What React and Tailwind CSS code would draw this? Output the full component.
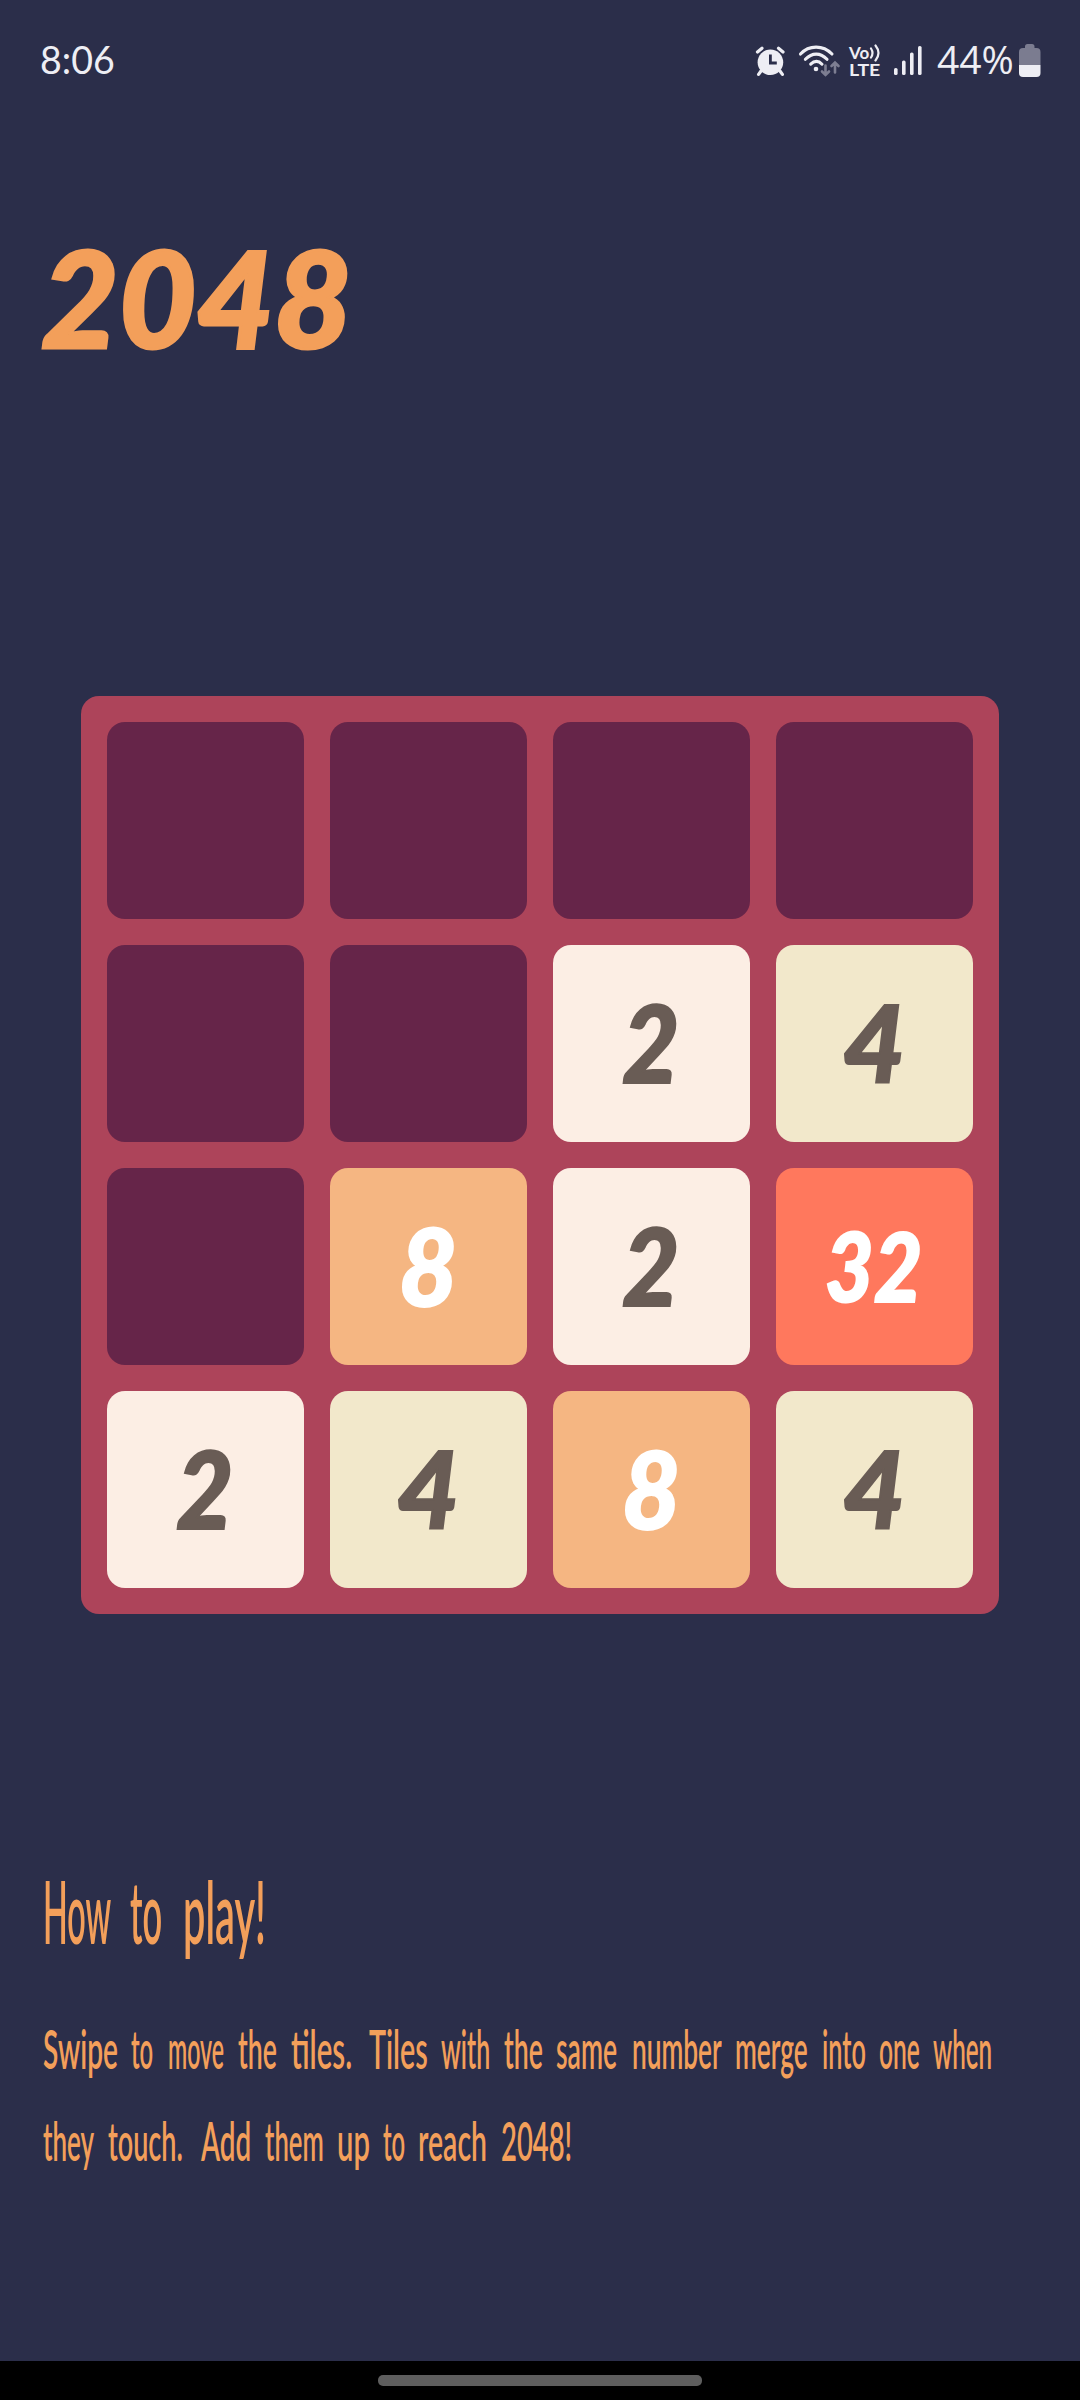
import { useLayoutEffect, useRef } from "react";

const BOARD = [
  0, 0, 0, 0,
  0, 0, 2, 4,
  0, 8, 2, 32,
  2, 4, 8, 4,
];

const TILE_STYLES = {
  0: "bg-[#662549]",
  2: "bg-[#fceee4] text-[#695c55] text-[106px]",
  4: "bg-[#f2e8cb] text-[#695c55] text-[106px]",
  8: "bg-[#f5b682] text-white text-[106px]",
  32: "bg-[#ff785d] text-white text-[96px]",
};

const TILE_WIDTHS = { 2: 57, 4: 62, 8: 58, 32: 97 };

// [word, space before it, width]
const HEADING = [["How", 0, 68], ["to", 19, 32], ["play!", 21, 83]];
const LINE_1 = [
  ["Swipe", 0, 75], ["to", 13, 22], ["move", 15, 56], ["the", 14, 39], ["tiles.", 14, 61],
  ["Tiles", 17, 59], ["with", 13, 49], ["the", 14, 39], ["same", 13, 61], ["number", 15, 90],
  ["merge", 13, 73], ["into", 14, 44], ["one", 13, 41], ["when", 13, 59],
];
const LINE_2 = [
  ["they", 0, 51], ["touch.", 14, 75], ["Add", 18, 50], ["them", 14, 59], ["up", 13, 33],
  ["to", 13, 22], ["reach", 13, 69], ["2048!", 14, 71],
];

// Condenses or widens its text so that it fills the given width.
function Fit({ text, width, gap = 0 }) {
  const ref = useRef(null);
  useLayoutEffect(() => {
    ref.current.style.transform = `scaleX(${width / ref.current.offsetWidth})`;
  }, [text, width]);
  return (
    <span className="block shrink-0" style={{ width, marginLeft: gap }}>
      <span ref={ref} className="inline-block origin-left whitespace-nowrap">{text}</span>
    </span>
  );
}

function Words({ words }) {
  return (
    <span className="flex">
      {words.map(([text, gap, width], i) => (
        <Fit key={i} text={text} gap={gap} width={width} />
      ))}
    </span>
  );
}

function StatusIcons() {
  return (
    <div className="flex h-[34px] items-start text-[#eeeef4]">
      <svg className="mt-0.5 h-[31px] w-[31px]" viewBox="0 0 31 31" fill="none" stroke="currentColor" strokeLinecap="round">
        <path d="M2.500 6 7 2.200M28 6 23.500 2.200M6 25 3.600 28.400M25 25l2.400 3.400" strokeWidth="3.200" />
        <circle cx="15.400" cy="16.300" r="12.800" fill="currentColor" stroke="none" />
        <path d="M15.400 10v7h5" stroke="#2b2e4a" strokeWidth="2.800" strokeLinecap="square" />
      </svg>
      <svg className="ml-3 h-[34px] w-[43px]" viewBox="0 0 43 34" fill="none" strokeLinecap="round">
        <g stroke="currentColor" strokeWidth="3.100">
          <path d="M2.500 10C11 .8 25 .8 34 10M7.400 15.300C14 8.400 22.500 8.400 29 15.300M12.700 20.200C16.500 16.400 20.500 16.400 24 20.200" />
        </g>
        <circle cx="18" cy="25" r="2.300" fill="currentColor" />
        <path d="M27.500 21.500V31M24 27.500l3.500 3.500 3.500-3.500M37 28.500V18.500M33.500 22l3.500-3.500 3.500 3.500" stroke="#7d7e92" strokeWidth="2.600" />
      </svg>
      <div className="ml-2 h-[34px] w-[35px] font-[Lato] text-[17px] leading-[17px] font-bold">
        <div className="flex h-[17px]">
          <Fit text="Vo" width={20} />
          <svg className="h-[18px] w-[12px]" viewBox="0 0 12 18" fill="none" stroke="currentColor" strokeWidth="2.200" strokeLinecap="round">
            <path d="M2 4.500Q5 9 2 13.500M6.500 1.500Q12.500 9 6.500 16.500" />
          </svg>
        </div>
        <Fit text="LTE" width={31} />
      </div>
      <svg className="ml-[8px] h-[34px] w-[31px]" viewBox="0 0 31 34" fill="currentColor">
        <rect x="2" y="24" width="3.600" height="7" rx="1.600" />
        <rect x="10" y="16.500" width="3.600" height="14.500" rx="1.600" />
        <rect x="18" y="8.500" width="3.600" height="22.500" rx="1.600" />
        <rect x="26" y="2" width="3.600" height="29" rx="1.600" />
      </svg>
      <div className="-mt-0.5 ml-3.5 h-[34px] font-['Open_Sans'] text-[39px] leading-[34px]">
        <Fit text="44%" width={77} />
      </div>
      <svg className="ml-[5px] h-[34px] w-[22px]" viewBox="0 0 22 34">
        <path d="M6 4V2.500Q6 0 8.500 0h4.500q2.500 0 2.500 2.500V4h2q4 0 4 4v13H0V8q0-4 4-4z" fill="#7b7c90" />
        <path d="M0 21h21.500v8q0 4-4 4H4q-4 0-4-4z" fill="currentColor" />
      </svg>
    </div>
  );
}

export default function App() {
  return (
    <div className="flex h-[2400px] w-[1080px] flex-col overflow-hidden bg-[#2b2e4a]">
      <header className="flex h-[120px] items-start justify-between pt-[44px] pr-[39px] pl-[40px]">
        <div className="-mt-0.5 font-[Lato] text-[39px] leading-[34px] text-[#eeeef4]">
          <Fit text="8:06" width={75} />
        </div>
        <StatusIcons />
      </header>

      <h1 className="h-[576px] pt-[107px] pl-[41px] font-[Lato] text-[134px] leading-[140px] font-black text-[#f39f5a] italic [-webkit-text-stroke:3px_#f39f5a]">
        <Fit text="2048" width={311} />
      </h1>

      <main className="mx-auto grid h-[918px] w-[918px] shrink-0 grid-cols-4 gap-[26px] rounded-[18px] bg-[#ad445a] p-[26px]">
        {BOARD.map((value, i) => (
          <div
            key={i}
            className={`flex h-[197px] items-center justify-center rounded-[18px] pr-[2px] pb-[4px] font-[Lato] leading-none font-black italic [-webkit-text-stroke:2px_currentColor] ${TILE_STYLES[value]}`}
          >
            {value > 0 && <Fit text={String(value)} width={TILE_WIDTHS[value]} />}
          </div>
        ))}
      </main>

      <section className="h-[747px] pt-[252px] pl-[43px] font-[Lato] text-[#f39f5a]">
        <h2 className="h-[130px] text-[86px] leading-[90px] font-semibold">
          <Words words={HEADING} />
        </h2>
        <p className="pt-[7px] text-[54px] leading-[92px] font-semibold">
          <Words words={LINE_1} />
          <Words words={LINE_2} />
        </p>
      </section>

      <footer className="flex h-[39px] justify-center bg-black pt-[14px]">
        <div className="h-[11px] w-[324px] rounded-[5px] bg-[#5e5e5e]" />
      </footer>
    </div>
  );
}
